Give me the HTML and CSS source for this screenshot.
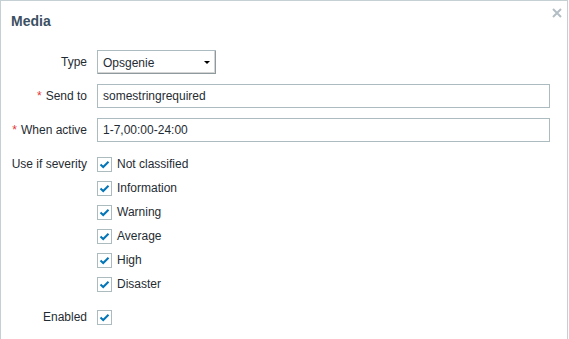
FILE: index.html
```html
<!DOCTYPE html>
<html lang="en">
<head>
  <meta charset="UTF-8" />
  <meta name="viewport" content="width=device-width, initial-scale=1.0" />
  <title>Media</title>
  <link rel="stylesheet" href="styles.css">
</head>
<body>
  <div class="dialog">
    <div class="dialog-header">
      <h4>Media</h4>
      <span class="close" title="Close">
        <svg width="10" height="10" viewBox="0 0 10 10">
          <path d="M1 1 L9 9 M9 1 L1 9" stroke="#b3bec4" stroke-width="2" />
        </svg>
      </span>
    </div>

    <div class="form">
      <label>Type</label>
      <div class="field">
        <div class="select">
          <span>Opsgenie</span>
          <span class="arrow"></span>
        </div>
      </div>

      <label><span class="req">*</span>Send to</label>
      <div class="field">
        <input type="text" value="somestringrequired">
      </div>

      <label><span class="req">*</span>When active</label>
      <div class="field">
        <input type="text" value="1-7,00:00-24:00">
      </div>

      <label>Use if severity</label>
      <ul class="check-list">
        <li><span class="checkbox"></span>Not classified</li>
        <li><span class="checkbox"></span>Information</li>
        <li><span class="checkbox"></span>Warning</li>
        <li><span class="checkbox"></span>Average</li>
        <li><span class="checkbox"></span>High</li>
        <li><span class="checkbox"></span>Disaster</li>
      </ul>

      <label class="enabled-label">Enabled</label>
      <div class="field enabled">
        <span class="checkbox"></span>
      </div>
    </div>
  </div>
</body>
</html>
```

FILE: styles.css
```css
body {
  margin: 0;
  padding: 0;
  overflow: hidden;
  font-family: "Liberation Sans", Arial, sans-serif;
  font-size: 12px;
  color: #1f2c33;
  background: #fff;
}

.dialog {
  box-sizing: border-box;
  width: 568px;
  height: 339px;
  border: 1px solid #c5d0d5;
  border-bottom: none;
  background: #fff;
  position: relative;
}

.dialog-header {
  padding: 12px 10px 0;
}

.dialog-header h4 {
  margin: 0;
  font-size: 14px;
  line-height: 16px;
  font-weight: bold;
  color: #3b5062;
}

.close {
  position: absolute;
  top: 7px;
  right: 5px;
  width: 10px;
  height: 10px;
}

.close svg {
  display: block;
}

.form {
  display: grid;
  grid-template-columns: 76px auto;
  column-gap: 10px;
  row-gap: 10px;
  padding: 0 10px;
  margin-top: 21px;
}

.form label {
  text-align: right;
  line-height: 24px;
  white-space: nowrap;
}

.req {
  color: #e33734;
  margin-right: 4px;
}

.field {
  display: flex;
  align-items: center;
  height: 24px;
}

input {
  box-sizing: border-box;
  width: 453px;
  height: 24px;
  margin: 0;
  padding: 0 5px;
  border: 1px solid #acbbc0;
  font-family: inherit;
  font-size: 12px;
  color: #1f2c33;
  background: #fff;
  outline: none;
}

.select {
  box-sizing: border-box;
  width: 119px;
  height: 24px;
  padding: 0 5px;
  display: flex;
  align-items: center;
  justify-content: space-between;
  border: 1px solid #acbbc0;
  border-right: none;
  border-bottom: none;
  box-shadow: inset -1px -1px 0 #8f9a9f, inset -2px -2px 0 #d4d4d4;
  background: #fff;
}

.arrow {
  width: 0;
  height: 0;
  margin-right: 1px;
  border-left: 3px solid transparent;
  border-right: 3px solid transparent;
  border-top: 3px solid #000;
}

.check-list {
  list-style: none;
  margin: 0;
  padding: 0;
}

.check-list li {
  display: flex;
  align-items: center;
  gap: 5px;
  height: 24px;
}

.checkbox {
  box-sizing: border-box;
  width: 15px;
  height: 15px;
  flex: none;
  border: 1px solid #acbbc0;
  background: #fff url("data:image/svg+xml,%3Csvg xmlns='http://www.w3.org/2000/svg' width='13' height='13' viewBox='0 0 13 13'%3E%3Cpath d='M2.5 6.5 L5.2 9 L10.5 3.8' fill='none' stroke='%230275b8' stroke-width='2'/%3E%3C/svg%3E") center no-repeat;
}

.enabled-label,
.enabled {
  margin-top: -1px;
}
```
